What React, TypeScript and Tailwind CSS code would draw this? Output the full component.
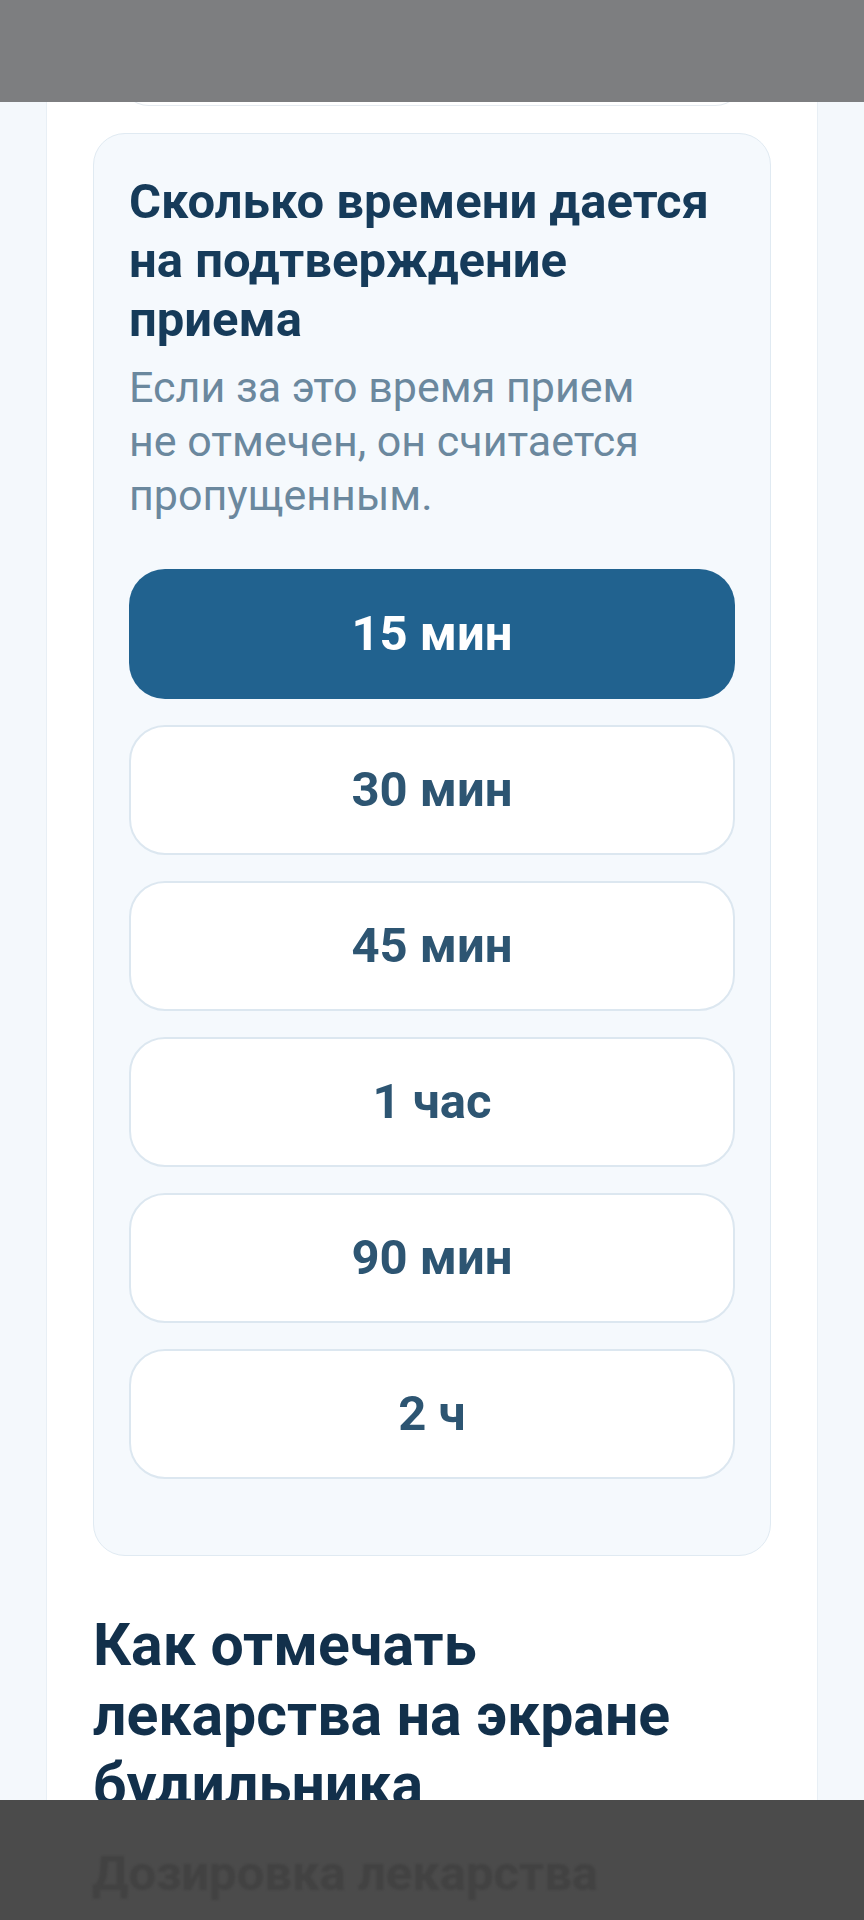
import { useState } from 'react'

const options = ['15 мин', '30 мин', '45 мин', '1 час', '90 мин', '2 ч']

export default function App() {
    const [selected, setSelected] = useState('15 мин')

    return (
        <div className="relative w-[864px] h-[1920px] overflow-hidden bg-[#f4f8fc] font-['Roboto',sans-serif]">
            <div className="mx-[46px] h-full bg-white border-x border-[#e8eff5]">
                {/* previous block, mostly under the status bar */}
                <div className="mx-auto w-[626px] h-[106px] rounded-b-[30px] border border-t-0 border-[#e4eaf0]" />

                <div className="mx-[46px] mt-[27px] rounded-[32px] border border-[#e0eaf2] bg-[#f5f9fd] px-[35px] pt-[38px] pb-[76px]">
                    <h2 className="text-[49px] leading-[59px] font-bold text-[#163b5a]">
                        Сколько времени дается на подтверждение приема
                    </h2>
                    <p className="mt-[11px] max-w-[545px] text-[43px] leading-[54px] text-[#6b889e]">
                        Если за это время прием не отмечен, он считается пропущенным.
                    </p>

                    <div className="mt-[47px] flex flex-col gap-[26px]">
                        {options.map(opt => (
                            <button
                                key={opt}
                                type="button"
                                onClick={() => setSelected(opt)}
                                className={`h-[130px] w-full rounded-[36px] text-[49px] font-bold ${selected === opt ? 'bg-[#21628f] text-white' : 'bg-white border-2 border-[#dce7f0] text-[#2d5572]'}`}
                            >
                                {opt}
                            </button>
                        ))}
                    </div>
                </div>

                <h2 className="mx-[46px] mt-[54px] max-w-[640px] text-[59px] leading-[70px] font-bold text-[#12304b]">
                    Как отмечать лекарства на экране будильника
                </h2>
            </div>

            {/* status bar */}
            <div className="absolute top-0 left-0 right-0 h-[102px] bg-[#7d7e80]" />

            {/* bottom scrim */}
            <div className="absolute bottom-0 left-0 right-0 h-[120px] bg-[#4b4b4b] pl-[92px] pt-[46px]">
                <div className="text-[49px] leading-[56px] font-bold text-[#424242] blur-[1px]">Дозировка лекарства</div>
            </div>
        </div>
    )
}
